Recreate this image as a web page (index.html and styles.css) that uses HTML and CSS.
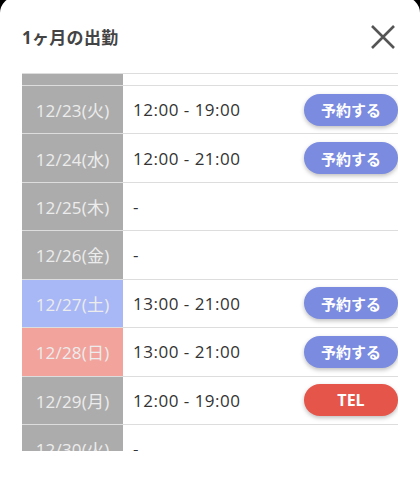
FILE: index.html
```html
<!DOCTYPE html>
<html lang="ja">
<head>
<meta charset="utf-8">
<link rel="stylesheet" href="styles.css">
</head>
<body>
<div class="modal">
  <div class="header">
    <h1 class="title">1ヶ月の出勤</h1>
    <button class="close" aria-label="閉じる">
      <svg width="26" height="26" viewBox="0 0 26 26"><path d="M2 2 L24 24 M24 2 L2 24" stroke="#555" stroke-width="2.6" fill="none"/></svg>
    </button>
  </div>
  <div class="scroll">
    <div class="list">
      <div class="row"><div class="date"></div><div class="time"></div></div>
      <div class="row"><div class="date">12/23(火)</div><div class="time">12:00 - 19:00</div><button class="btn">予約する</button></div>
      <div class="row"><div class="date">12/24(水)</div><div class="time">12:00 - 21:00</div><button class="btn">予約する</button></div>
      <div class="row"><div class="date">12/25(木)</div><div class="time">-</div></div>
      <div class="row"><div class="date">12/26(金)</div><div class="time">-</div></div>
      <div class="row"><div class="date sat">12/27(土)</div><div class="time">13:00 - 21:00</div><button class="btn">予約する</button></div>
      <div class="row"><div class="date sun">12/28(日)</div><div class="time">13:00 - 21:00</div><button class="btn">予約する</button></div>
      <div class="row"><div class="date">12/29(月)</div><div class="time">12:00 - 19:00</div><button class="btn tel">TEL</button></div>
      <div class="row"><div class="date">12/30(火)</div><div class="time">-</div></div>
    </div>
  </div>
</div>
</body>
</html>
```
FILE: styles.css
```css
html, body {
  margin: 0;
  padding: 0;
  background: #000;
  height: 100%;
  overflow: hidden;
}
body {
  font-family: "Open Sans", "Noto Sans CJK JP", sans-serif;
}
.modal {
  background: #fff;
  border-radius: 16px 16px 0 0;
  margin-top: -3px;
  padding: 3px 22px 40px;
  height: 500px;
}
.header {
  height: 73px;
  display: flex;
  align-items: center;
  justify-content: space-between;
}
.title {
  margin: 0;
  font-size: 17px;
  font-weight: 700;
  color: #444;
  letter-spacing: 0.3px;
}
.close {
  border: 0;
  background: none;
  padding: 0;
  margin-right: 2px;
  width: 26px;
  height: 26px;
  display: flex;
}
.scroll {
  border-top: 1px solid #ddd;
  height: 377px;
  overflow: hidden;
}
.list {
  margin-top: -36.43px;
}
.row {
  display: flex;
  align-items: center;
  height: 47.43px;
  border-bottom: 1px solid #ddd;
}
.date {
  width: 101px;
  height: 100%;
  flex: none;
  background: #acacac;
  color: #ececec;
  font-size: 17px;
  letter-spacing: 0.2px;
  display: flex;
  align-items: center;
  justify-content: center;
}
.date.sat { background: #a8b7f6; }
.date.sun { background: #f2a39c; }
.time {
  flex: 1;
  padding-left: 10px;
  font-size: 17px;
  letter-spacing: 0.5px;
  color: #333;
}
.btn {
  flex: none;
  width: 94px;
  height: 32px;
  border: 0;
  border-radius: 16px;
  background: #7a8be0;
  color: #fff;
  font-family: inherit;
  font-size: 15px;
  font-weight: 700;
  box-shadow: 0 2px 4px rgba(0,0,0,0.25);
  padding: 0;
}
.btn.tel { background: #e5554a; font-size: 16px; }
```
